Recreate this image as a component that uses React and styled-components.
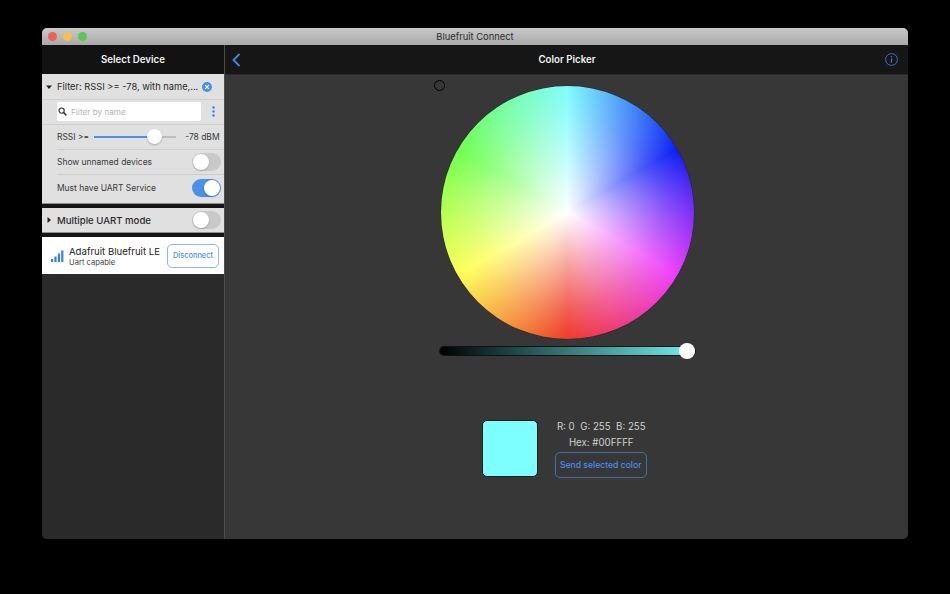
import React from 'react';
import styled, { createGlobalStyle } from 'styled-components';

const GlobalStyle = createGlobalStyle`
  html, body { margin: 0; padding: 0; background: #000; height: 100%; }
  body { font-family: Inter, "Liberation Sans", sans-serif; -webkit-font-smoothing: antialiased; }
  * { box-sizing: border-box; }
`;

const Desktop = styled.div`
  width: 950px;
  height: 594px;
  padding: 28px 42px 55px;
  background: #000;
`;

const Window = styled.div`
  width: 866px;
  height: 511px;
  display: flex;
  flex-direction: column;
  border-radius: 5px;
  overflow: hidden;
  background: #373737;
`;

const TitleBar = styled.div`
  position: relative;
  height: 17px;
  flex: none;
  display: flex;
  align-items: center;
  justify-content: center;
  background: linear-gradient(#c9c9c9, #a9a9a9);
  color: #2c2c2c;
  font-size: 9.4px;
`;

const Lights = styled.div`
  position: absolute;
  left: 6px;
  top: 4px;
  display: flex;
  gap: 6px;
`;

const Light = styled.span`
  width: 9px;
  height: 9px;
  border-radius: 50%;
  background: ${({ color }) => color};
`;

const Body = styled.div`
  flex: 1;
  display: flex;
  min-height: 0;
`;

const Sidebar = styled.div`
  width: 182px;
  flex: none;
  display: flex;
  flex-direction: column;
  background: #2a2a2a;
`;

const SideHeader = styled.div`
  height: 29px;
  flex: none;
  display: flex;
  align-items: center;
  justify-content: center;
  padding-bottom: 1px;
  background: #121212;
  color: #f2f2f2;
  font-size: 9.7px;
  font-weight: 600;
`;

const Panel = styled.div`
  background: #e0e0e0;
  color: #2a2a2a;
  border-bottom: 1px solid #8f8f8f;
`;

const FilterHead = styled.div`
  height: 25px;
  display: flex;
  align-items: center;
  padding: 0 12px 0 4px;
  font-size: 9.3px;
  white-space: nowrap;
`;

const Caret = styled.svg`
  width: 6px;
  height: 6px;
  margin-right: 5px;
  flex: none;
`;

const HeadText = styled.span`
  flex: 1;
`;

const SearchRow = styled.div`
  height: 26px;
  display: flex;
  align-items: center;
  padding: 0 8px 1px 15px;
  border-top: 1px solid #cfcfcf;
  border-bottom: 1px solid #cfcfcf;
`;

const SearchField = styled.div`
  width: 144px;
  height: 19px;
  display: flex;
  align-items: center;
  gap: 4px;
  padding-left: 1px;
  background: #fff;
  border-radius: 2px;
  color: #b5b5b5;
  font-size: 8.2px;
`;

const Dots = styled.svg`
  width: 3px;
  height: 11px;
  margin-left: 11px;
`;

const SettingRow = styled.div`
  height: 25px;
  display: flex;
  align-items: center;
  justify-content: space-between;
  margin-left: 15px;
  padding-right: 3px;
  font-size: 8.45px;
  color: #3a3a3a;
  white-space: nowrap;
  border-bottom: ${({ $last }) => ($last ? 'none' : '1px solid #cdcdcd')};
`;

const RangeTrack = styled.div`
  position: relative;
  width: 82px;
  height: 2px;
  flex: none;
  margin: 0 9px 0 5px;
  background: linear-gradient(to right, #4a8fe8 74%, #bdbdbd 74%);
`;

const RangeThumb = styled.span`
  position: absolute;
  left: 53px;
  top: -7px;
  width: 15px;
  height: 15px;
  border-radius: 50%;
  background: #fff;
  box-shadow: 0 1px 2px rgba(0, 0, 0, 0.25);
`;

const Rssi = styled.span`
  white-space: nowrap;
  padding-right: 1.5px;
`;

const Toggle = styled.span`
  position: relative;
  display: block;
  width: 29px;
  height: 18px;
  flex: none;
  border-radius: 9px;
  background: ${({ $on }) => ($on ? '#4a8fe8' : '#c9c9c9')};
  &::after {
    content: '';
    position: absolute;
    top: 1px;
    left: ${({ $on }) => ($on ? '12px' : '1px')};
    width: 16px;
    height: 16px;
    border-radius: 50%;
    background: #fff;
    box-shadow: 0 1px 2px rgba(0, 0, 0, 0.2);
  }
`;

const Bottom = styled.div`
  height: 3px;
`;

const Gap = styled.div`
  height: ${({ $h }) => $h}px;
  flex: none;
  background: #161616;
`;

const ModeRow = styled.div`
  height: 25px;
  display: flex;
  align-items: center;
  padding: 0 3px 0 4px;
  background: #e0e0e0;
  color: #2a2a2a;
  font-size: 9.6px;
  font-weight: 500;
  border-bottom: 1px solid #8f8f8f;
`;

const DeviceCard = styled.div`
  height: 37px;
  display: flex;
  align-items: center;
  padding: 0 5px 0 9px;
  background: #fff;
  color: #222;
`;

const DeviceInfo = styled.div`
  flex: 1;
  margin-left: 5px;
  white-space: nowrap;
`;

const DeviceName = styled.div`
  font-size: 9.6px;
  line-height: 13px;
`;

const DeviceSub = styled.div`
  font-size: 7.6px;
  line-height: 9px;
  color: #444;
`;

const OutlineButton = styled.div`
  display: flex;
  align-items: center;
  justify-content: center;
  border-radius: 5px;
  border: 1px solid ${({ $dark }) => ($dark ? '#44709f' : '#8fb6ea')};
  color: ${({ $dark }) => ($dark ? '#4a8cf0' : '#4a8fe8')};
  width: ${({ $w }) => $w}px;
  height: ${({ $h }) => $h}px;
  font-size: ${({ $fs }) => $fs}px;
  font-weight: 500;
  white-space: nowrap;
`;

const Main = styled.div`
  flex: 1;
  display: flex;
  flex-direction: column;
  border-left: 1px solid #4c4c4c;
`;

const MainHeader = styled.div`
  height: 29px;
  flex: none;
  display: grid;
  grid-template-columns: 1fr auto 1fr;
  align-items: center;
  padding: 0 6px 0 7px;
  background: #161616;
  color: #f2f2f2;
  font-size: 9.7px;
  font-weight: 600;
`;

const HeaderEnd = styled.div`
  display: flex;
  justify-content: ${({ $right }) => ($right ? 'flex-end' : 'flex-start')};
  padding-right: ${({ $right }) => ($right ? '4px' : '0')};
`;

const Picker = styled.div`
  flex: 1;
  display: flex;
  flex-direction: column;
  align-items: center;
  padding-top: 11px;
  border-top: 1px solid #2c2c2c;
`;

const WheelBox = styled.div`
  position: relative;
  width: 253px;
  height: 253px;
  margin-left: 1px;
`;

const Wheel = styled.div`
  width: 253px;
  height: 253px;
  border-radius: 50%;
  box-shadow: 0 0 1px rgba(0, 0, 0, 0.9);
  background:
    radial-gradient(circle closest-side, #fff 0%, rgba(255, 255, 255, 0.55) 40%, rgba(255, 255, 255, 0.2) 75%, rgba(255, 255, 255, 0) 100%),
    conic-gradient(#7ffcfb 0deg, #0a1ef5 60deg, #ee3df8 120deg, #ee3a2a 180deg, #ffff54 240deg, #6dff4f 300deg, #7ffcfb 360deg);
`;

const Marker = styled.span`
  position: absolute;
  left: -7px;
  top: -6px;
  width: 11px;
  height: 11px;
  border-radius: 50%;
  border: 1.5px solid #000;
`;

const Brightness = styled.div`
  position: relative;
  width: 255px;
  height: 8px;
  margin: 8px 0 0 1px;
  border-radius: 4px;
  background: linear-gradient(to right, #000, #6ff2f0);
  box-shadow: 0 0 0 1px #111;
`;

const BrightnessThumb = styled.span`
  position: absolute;
  right: 0;
  top: -4px;
  width: 16px;
  height: 16px;
  border-radius: 50%;
  background: #fff;
`;

const Result = styled.div`
  display: flex;
  gap: 16.5px;
  margin: 65px 4.5px 0 0;
`;

const Swatch = styled.div`
  width: 56.5px;
  height: 57px;
  border-radius: 5px;
  background: #7dffff;
  border: 1px solid #0c1a1a;
`;

const Values = styled.div`
  display: flex;
  flex-direction: column;
  align-items: center;
  margin-top: -1px;
  color: #d0d0d0;
  font-size: 9.7px;
  line-height: 16px;
  white-space: pre;
`;

const ValueLine = styled.div`
  height: 16px;
  margin-left: 1px;
`;

const SendWrap = styled.div`
  margin-top: 1px;
`;

const SearchIcon = () => (
  <svg width="9" height="9" viewBox="0 0 10 10" fill="none" stroke="#333" strokeWidth="1.3">
    <circle cx="4" cy="4" r="2.9" />
    <path d="M6.2 6.2 9.3 9.3" strokeWidth="1.7" />
  </svg>
);

const ClearIcon = () => (
  <svg width="10" height="10" viewBox="0 0 10 10">
    <circle cx="5" cy="5" r="5" fill="#4a8fe8" />
    <path d="M3.2 3.2 6.8 6.8M6.8 3.2 3.2 6.8" stroke="#fff" strokeWidth="1.1" />
  </svg>
);

const SignalIcon = () => (
  <svg width="13" height="12" viewBox="0 0 13 12" fill="#3b7fdc">
    <rect x="0" y="9" width="2.2" height="3" />
    <rect x="3.4" y="6.5" width="2.2" height="5.5" />
    <rect x="6.8" y="3.5" width="2.2" height="8.5" />
    <rect x="10.2" y="0.5" width="2.2" height="11.5" />
  </svg>
);

const BackIcon = () => (
  <svg width="9" height="14" viewBox="0 0 9 14" fill="none" stroke="#3f86e6" strokeWidth="1.8">
    <path d="M7.5 1 1.5 7l6 6" />
  </svg>
);

const InfoIcon = () => (
  <svg width="13" height="13" viewBox="0 0 13 13" fill="none">
    <circle cx="6.5" cy="6.5" r="5.9" stroke="#3f7cc8" strokeWidth="0.9" />
    <rect x="5.9" y="5.4" width="1.2" height="4.2" fill="#3f7cc8" />
    <circle cx="6.5" cy="3.7" r="0.8" fill="#3f7cc8" />
  </svg>
);

export default function App() {
  return (
    <Desktop>
      <GlobalStyle />
      <Window>
        <TitleBar>
          <Lights>
            <Light color="#ec6158" />
            <Light color="#f5bf4f" />
            <Light color="#61c454" />
          </Lights>
          Bluefruit Connect
        </TitleBar>
        <Body>
          <Sidebar>
            <SideHeader>Select Device</SideHeader>
            <Panel>
              <FilterHead>
                <Caret viewBox="0 0 6 6"><path d="M0 1.5h6L3 5z" fill="#222" /></Caret>
                <HeadText>Filter: RSSI &gt;= -78, with name,...</HeadText>
                <ClearIcon />
              </FilterHead>
              <SearchRow>
                <SearchField>
                  <SearchIcon />
                  Filter by name
                </SearchField>
                <Dots viewBox="0 0 3 11">
                  <g fill="#3b7fdc">
                    <circle cx="1.5" cy="1.5" r="1.2" />
                    <circle cx="1.5" cy="5.5" r="1.2" />
                    <circle cx="1.5" cy="9.5" r="1.2" />
                  </g>
                </Dots>
              </SearchRow>
              <SettingRow>
                <span>RSSI &gt;=</span>
                <RangeTrack><RangeThumb /></RangeTrack>
                <Rssi>-78 dBM</Rssi>
              </SettingRow>
              <SettingRow>
                <span>Show unnamed devices</span>
                <Toggle />
              </SettingRow>
              <SettingRow $last>
                <span>Must have UART Service</span>
                <Toggle $on />
              </SettingRow>
              <Bottom />
            </Panel>
            <Gap $h={4} />
            <ModeRow>
              <Caret viewBox="0 0 6 6"><path d="M1.5 0v6L5 3z" fill="#222" /></Caret>
              <HeadText>Multiple UART mode</HeadText>
              <Toggle />
            </ModeRow>
            <Gap $h={4} />
            <DeviceCard>
              <SignalIcon />
              <DeviceInfo>
                <DeviceName>Adafruit Bluefruit LE</DeviceName>
                <DeviceSub>Uart capable</DeviceSub>
              </DeviceInfo>
              <OutlineButton $w={52} $h={24} $fs={7.4}>Disconnect</OutlineButton>
            </DeviceCard>
          </Sidebar>
          <Main>
            <MainHeader>
              <HeaderEnd><BackIcon /></HeaderEnd>
              <span>Color Picker</span>
              <HeaderEnd $right><InfoIcon /></HeaderEnd>
            </MainHeader>
            <Picker>
              <WheelBox>
                <Wheel />
                <Marker />
              </WheelBox>
              <Brightness><BrightnessThumb /></Brightness>
              <Result>
                <Swatch />
                <Values>
                  <ValueLine>R: 0  G: 255  B: 255</ValueLine>
                  <ValueLine>Hex: #00FFFF</ValueLine>
                  <SendWrap>
                    <OutlineButton $dark $w={92} $h={26} $fs={8.6}>Send selected color</OutlineButton>
                  </SendWrap>
                </Values>
              </Result>
            </Picker>
          </Main>
        </Body>
      </Window>
    </Desktop>
  );
}
